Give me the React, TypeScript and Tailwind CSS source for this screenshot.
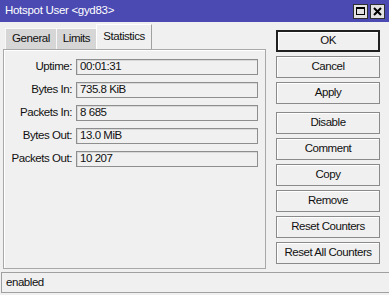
import React from "react";

const font = { fontFamily: '"Liberation Sans", Arial, sans-serif' };

const rows: [string, string][] = [
  ["Uptime:", "00:01:31"],
  ["Bytes In:", "735.8 KiB"],
  ["Packets In:", "8 685"],
  ["Bytes Out:", "13.0 MiB"],
  ["Packets Out:", "10 207"],
];

function Btn({ label, primary, className = "" }: { label: string; primary?: boolean; className?: string }) {
  return (
    <div
      className={
        "h-[22px] w-[104px] flex items-center justify-center bg-[#f0f0f0] shadow-[inset_1px_1px_0_#ffffff] " +
        (primary ? "border-2 border-[#202020] " : "border border-[#8a8a8a] ") +
        className
      }
    >
      {label}
    </div>
  );
}

export default function App() {
  return (
    <div
      className="w-[389px] h-[295px] bg-[#f0f0f0] text-[11.5px] leading-none tracking-[-0.45px] text-[#101010] overflow-hidden flex flex-col"
      style={font}
    >
      {/* Title bar */}
      <div className="h-[22px] bg-[#4a4ab2] flex items-center pl-[5px] pr-[4px] text-white text-[11.5px] tracking-[-0.3px]">
        <span className="flex-1">Hotspot User &lt;gyd83&gt;</span>
        <div className="flex gap-[2px]">
          <div className="w-[15px] h-[15px] bg-[#e2e2e2] border border-[#303030] flex items-center justify-center">
            <div className="w-[9px] h-[8px] border border-black border-t-2" />
          </div>
          <div className="w-[15px] h-[15px] bg-[#e2e2e2] border border-[#303030] flex items-center justify-center">
            <svg width="9" height="9" viewBox="0 0 9 9">
              <path d="M1 1 L8 8 M8 1 L1 8" stroke="#000" strokeWidth="2" />
            </svg>
          </div>
        </div>
      </div>

      {/* Body */}
      <div className="flex h-[250px]">
        {/* Left */}
        <div className="ml-[3px] w-[263px] flex flex-col">
          <div className="h-[27px] flex items-end pl-[2px]">
            <div className="w-[51px] h-[21px] bg-[#d6d6d6] flex items-center justify-center border-t border-l border-[#f8f8f8]">
              General
            </div>
            <div className="w-[40px] h-[21px] bg-[#d6d6d6] flex items-center justify-center border-t border-l border-[#f8f8f8]">
              Limits
            </div>
            <div className="w-[56px] h-[25px] bg-[#f0f0f0] flex items-start pt-[6px] justify-center border-t border-l border-r border-t-white border-l-white border-r-[#a0a0a0]">
              Statistics
            </div>
          </div>
          <div className="h-[220px] border border-[#a8a8a8] shadow-[inset_1px_1px_0_#ffffff] pt-[9px] flex flex-col gap-[7px]">
            {rows.map(([l, v]) => (
              <div key={l} className="flex items-center h-[16px]">
                <div className="w-[69px] text-right pr-[1px]">{l}</div>
                <div className="ml-[3px] w-[182px] h-[16px] border border-[#8e8e8e] shadow-[inset_1px_1px_0_#d8d8d8] flex items-center pl-[3px]">
                  {v}
                </div>
              </div>
            ))}
          </div>
        </div>

        {/* Right buttons */}
        <div className="ml-[10px] pt-[8px] flex flex-col gap-[4px]">
          <Btn label="OK" primary />
          <Btn label="Cancel" />
          <Btn label="Apply" />
          <Btn label="Disable" className="mt-[4px]" />
          <Btn label="Comment" />
          <Btn label="Copy" />
          <Btn label="Remove" />
          <Btn label="Reset Counters" />
          <Btn label="Reset All Counters" />
        </div>
      </div>

      {/* Status bar */}
      <div className="h-[21px] border-t border-b border-[#a0a0a0] border-l ml-[1px] flex items-center pl-[4px]">
        enabled
      </div>
    </div>
  );
}
